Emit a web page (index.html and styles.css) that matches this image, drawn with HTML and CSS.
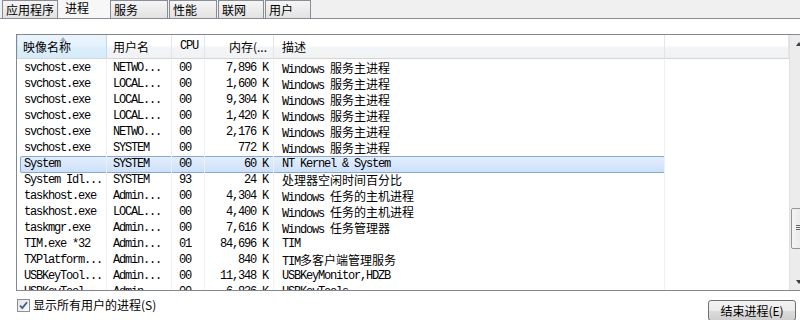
FILE: index.html
```html
<!DOCTYPE html>
<html lang="zh-CN">
<head>
<meta charset="UTF-8">
<title>Windows 任务管理器</title>
<link rel="stylesheet" href="styles.css">
</head>
<body>

<div class="tabs">
  <div class="tab t1">应用程序</div>
  <div class="tab t2 active">进程</div>
  <div class="tab t3">服务</div>
  <div class="tab t4">性能</div>
  <div class="tab t5">联网</div>
  <div class="tab t6">用户</div>
</div>

<div class="page">

<div class="list">
  <div class="table">
    <div class="head">
      <div class="hc sorted">映像名称<span class="arrow"></span></div>
      <div class="hc">用户名</div>
      <div class="hc mono">CPU</div>
      <div class="hc num">内存(...</div>
      <div class="hc desc">描述</div>
      <div class="hc"></div>
    </div>
    <div id="rows" class="rows"></div>
  </div>

  <div class="scroll">
    <div class="sbtn"><span class="up"></span></div>
    <div class="track"><div class="thumb"></div></div>
    <div class="sbtn"><span class="down"></span></div>
  </div>
</div>

<div class="foot">
  <div class="check">
    <span class="box">
      <svg width="9" height="9" viewBox="0 0 9 9"><path d="M1 4.5 L3.3 7 L8 1.2" fill="none" stroke="#3c5a91" stroke-width="1.8"/></svg>
    </span>
    <span>显示所有用户的进程(S)</span>
  </div>
  <div class="btn">结束进程(E)</div>
</div>

</div>

<script>
let procs=[
 ["svchost.exe","NETWO...","00","7,896 K","Windows 服务主进程"],
 ["svchost.exe","LOCAL...","00","1,600 K","Windows 服务主进程"],
 ["svchost.exe","LOCAL...","00","9,304 K","Windows 服务主进程"],
 ["svchost.exe","LOCAL...","00","1,420 K","Windows 服务主进程"],
 ["svchost.exe","NETWO...","00","2,176 K","Windows 服务主进程"],
 ["svchost.exe","SYSTEM","00","772 K","Windows 服务主进程"],
 ["System","SYSTEM","00","60 K","NT Kernel & System",true],
 ["System Idl...","SYSTEM","93","24 K","处理器空闲时间百分比"],
 ["taskhost.exe","Admin...","00","4,304 K","Windows 任务的主机进程"],
 ["taskhost.exe","LOCAL...","00","4,400 K","Windows 任务的主机进程"],
 ["taskmgr.exe","Admin...","00","7,616 K","Windows 任务管理器"],
 ["TIM.exe *32","Admin...","01","84,696 K","TIM"],
 ["TXPlatform...","Admin...","00","840 K","TIM多客户端管理服务"],
 ["USBKeyTool...","Admin...","00","11,348 K","USBKeyMonitor,HDZB"],
 ["USBKeyTool...","Admin...","00","6,836 K","USBKeyTools"]
];

function esc(s){
 return s.replace(/&/g,"&amp;").replace(/</g,"&lt;");
}

// chinese runs get normal spacing, latin stays narrow
function desc(s){
 return esc(s).replace(/([\u4e00-\u9fff]+)/g,'<i class="zh">$1</i>');
}

function render(){
 let rows=document.getElementById("rows");
 procs.forEach(p=>{
  let div=document.createElement("div");
  div.className="row"+(p[5]?" sel":"");
  div.innerHTML=`
   <span>${esc(p[0])}</span>
   <span>${esc(p[1])}</span>
   <span>${p[2]}</span>
   <span class="num">${p[3]}</span>
   <span class="desc">${desc(p[4])}</span>
   <span></span>
  `;
  rows.appendChild(div);
 });
}

render();
</script>

</body>
</html>
```

FILE: styles.css
```css
body{
  margin:0;
  width:800px;
  height:320px;
  overflow:hidden;
  background:#fff;
  font-family:"Noto Sans CJK SC",sans-serif;
  font-size:12px;
  color:#000;
}

/* tab strip */

.tabs{
  display:flex;
  height:18px;
  padding-left:2px;
  background:#f0f0f0;
  border-bottom:1px solid #898c95;
}

.tab{
  box-sizing:border-box;
  height:18px;
  margin-right:1px;
  padding-left:3px;
  border:1px solid #898c95;
  border-bottom:none;
  background:linear-gradient(#f5f5f5,#e2e2e2);
  line-height:17px;
  white-space:nowrap;
}

.t1{ width:56px; }
.t2{ width:51px; margin-right:0; }
.t3{ width:58px; }
.t4{ width:48px; }
.t5{ width:46px; }
.t6{ width:46px; }

.tab.active{
  border:none;
  background:#f7f7f7;
  padding-left:6px;
  line-height:15px;
}

/* process list */

.page{
  padding-top:15px;
}

.list{
  display:flex;
  width:790px;
  height:255px;
  margin-left:16px;
  border:1px solid #828790;
}

.table{
  width:773px;
  overflow:hidden;
}

.head,.row{
  display:grid;
  grid-template-columns:90px 65px 33px 69px 391px 1fr;
}

.head{
  height:23px;
  margin-bottom:1px;
  border-bottom:1px solid #d5d5d5;
  background:linear-gradient(#fff 0,#fff 45%,#f3f4f6 55%,#f1f2f4);
}

.hc{
  position:relative;
  padding-left:6px;
  line-height:23px;
  border-right:1px solid #e3e5e8;
  white-space:nowrap;
  overflow:hidden;
}

.hc.sorted{
  background:linear-gradient(#e9f4fc 0,#e6f2fc 45%,#dbeefb 55%,#d6ebfa);
  border-right:1px solid #bcdcf4;
  border-left:1px solid #c8e2f6;
  padding-left:5px;
}

.hc.mono{
  padding-left:8px;
  font-family:"Liberation Mono",monospace;
  letter-spacing:-1.2px;
}

.hc.num{
  text-align:right;
  padding-right:6px;
}

.hc.desc{
  padding-left:8px;
}

.arrow{
  position:absolute;
  top:2px;
  left:42px;
  border-left:3px solid transparent;
  border-right:3px solid transparent;
  border-bottom:4px solid #9aaec6;
}

.rows{
  height:230px;
  overflow:hidden;
}

.row{
  position:relative;
  height:16px;
  line-height:16px;
  font-family:"Liberation Mono","Noto Sans CJK SC",monospace;
  letter-spacing:-1.2px;
}

.row span{
  position:relative;
  padding-left:7px;
  border-right:1px solid #f0f0f0;
  white-space:nowrap;
  overflow:hidden;
}

.row span:nth-child(2){
  padding-left:6px;
}

.row span.num{
  text-align:right;
  padding-right:5px;
}

.row span.desc{
  padding-left:8px;
}

.row span:last-child{
  border-right:none;
}

.zh{
  font-style:normal;
  font-family:"Noto Sans CJK SC",sans-serif;
  letter-spacing:0;
}

.row.sel::before{
  content:"";
  position:absolute;
  left:3px;
  top:0;
  width:643px;
  height:15px;
  border:1px solid #84a9d6;
  border-radius:2px;
  background:linear-gradient(#e4eefc,#cde0fa);
}

/* scrollbar */

.scroll{
  width:17px;
  display:flex;
  flex-direction:column;
  background:#ececec;
  border-left:1px solid #e0e0e0;
}

.sbtn{
  height:17px;
  display:flex;
  align-items:center;
  justify-content:center;
}

.up{
  border-left:3px solid transparent;
  border-right:3px solid transparent;
  border-bottom:4px solid #404040;
}

.down{
  border-left:3px solid transparent;
  border-right:3px solid transparent;
  border-top:4px solid #404040;
}

.track{
  flex:1;
}

.thumb{
  position:relative;
  height:39px;
  margin:156px 1px 0 1px;
  border:1px solid #959595;
  border-radius:2px;
  background:linear-gradient(90deg,#f4f4f4,#e4e4e4);
}

.thumb::before{
  content:"";
  position:absolute;
  left:4px;
  top:16px;
  width:6px;
  height:5px;
  background:repeating-linear-gradient(#666 0,#666 1px,transparent 1px,transparent 2px);
}

/* bottom bar */

.foot{
  display:flex;
  justify-content:space-between;
  align-items:flex-start;
  padding:7px 4px 0 17px;
}

.check{
  display:flex;
  align-items:center;
  gap:3px;
  height:14px;
  line-height:14px;
}

.box{
  box-sizing:border-box;
  width:13px;
  height:13px;
  border:1px solid #8e8f8f;
  background:linear-gradient(135deg,#e4e4e4,#fafafa);
  display:flex;
  align-items:center;
  justify-content:center;
}

.btn{
  box-sizing:border-box;
  width:88px;
  height:21px;
  margin-top:2px;
  border:1px solid #707070;
  border-radius:3px;
  background:linear-gradient(#f2f2f2 0,#ebebeb 50%,#dddddd 50%,#cfcfcf);
  text-align:center;
  line-height:19px;
}
```
